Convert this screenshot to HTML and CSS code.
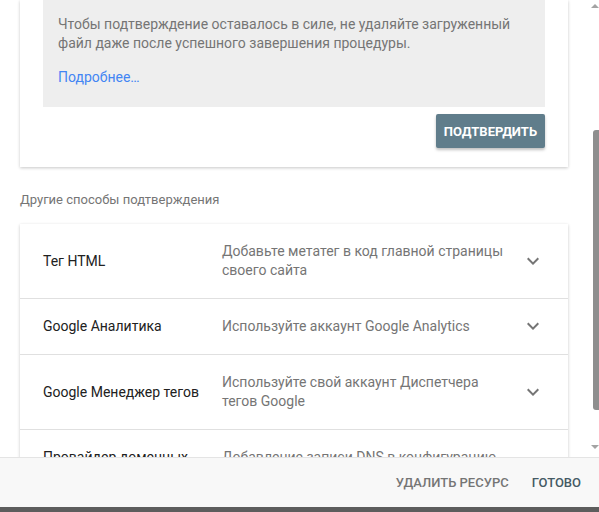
FILE: index.html
```html
<!DOCTYPE html>
<html lang="ru">
<head>
    <meta charset="UTF-8">
    <meta name="viewport" content="width=device-width, initial-scale=1.0">
    <title>Подтверждение ресурса</title>
    <link rel="stylesheet" href="styles.css">
</head>
<body>
<div class="dialog">
    <div class="dialog-body">
        <div class="content">
            <!-- HTML file method, already expanded -->
            <section class="card verify-card">
                <div class="note">
                    <p>Чтобы подтверждение оставалось в силе, не удаляйте загруженный файл даже после успешного завершения процедуры.</p>
                    <a class="more" href="#">Подробнее…</a>
                </div>
                <div class="card-actions">
                    <button class="btn-raised">Подтвердить</button>
                </div>
            </section>

            <h3 class="section-title">Другие способы подтверждения</h3>

            <div class="card methods">
                <div class="method">
                    <div class="method-name">Тег HTML</div>
                    <div class="method-desc">Добавьте метатег в код главной страницы своего сайта</div>
                    <svg class="chevron" viewBox="0 0 24 24"><path d="M7.4 8.6L12 13.2l4.6-4.6L18 10l-6 6-6-6z"/></svg>
                </div>
                <div class="method">
                    <div class="method-name">Google Аналитика</div>
                    <div class="method-desc">Используйте аккаунт Google Analytics</div>
                    <svg class="chevron" viewBox="0 0 24 24"><path d="M7.4 8.6L12 13.2l4.6-4.6L18 10l-6 6-6-6z"/></svg>
                </div>
                <div class="method">
                    <div class="method-name">Google Менеджер тегов</div>
                    <div class="method-desc">Используйте свой аккаунт Диспетчера тегов Google</div>
                    <svg class="chevron" viewBox="0 0 24 24"><path d="M7.4 8.6L12 13.2l4.6-4.6L18 10l-6 6-6-6z"/></svg>
                </div>
                <div class="method">
                    <div class="method-name">Провайдер доменных имен</div>
                    <div class="method-desc">Добавление записи DNS в конфигурацию домена</div>
                    <svg class="chevron" viewBox="0 0 24 24"><path d="M7.4 8.6L12 13.2l4.6-4.6L18 10l-6 6-6-6z"/></svg>
                </div>
            </div>
        </div>

        <div class="scrollbar">
            <span class="arrow up"></span>
            <span class="thumb"></span>
            <span class="arrow down"></span>
        </div>
    </div>

    <footer class="dialog-footer">
        <button class="btn-flat">Удалить ресурс</button>
        <button class="btn-flat primary">Готово</button>
    </footer>
</div>
<div class="page-behind"></div>
</body>
</html>
```

FILE: styles.css
```css
body {
    margin: 0;
    font-family: Roboto, "Noto Sans", sans-serif;
    background-color: #fff;
    overflow: hidden;
}
.dialog {
    height: 507px;
    display: flex;
    flex-direction: column;
}
.dialog-body {
    flex: 1;
    display: flex;
    overflow: hidden;
}
.content {
    flex: 1;
    padding: 0 17px 0 20px;
}
.card {
    background-color: #fff;
    box-shadow: 0 1px 3px rgba(0, 0, 0, 0.22);
}

/* expanded method card */
.verify-card {
    padding: 0 23px 19px;
}
.note {
    background-color: #eeeeee;
    padding: 15px 15px 20px;
    font-size: 14px;
    line-height: 19px;
    color: #757575;
}
.note p {
    margin: 0 0 15px;
}
.more {
    color: #4285f4;
    text-decoration: none;
}
.card-actions {
    display: flex;
    justify-content: flex-end;
    margin-top: 7px;
}
.btn-raised {
    height: 34px;
    padding: 0 8px;
    border: none;
    border-radius: 2px;
    background-color: #607d8b;
    color: #fff;
    font-family: inherit;
    font-size: 13px;
    font-weight: 700;
    text-transform: uppercase;
    box-shadow: 0 2px 3px rgba(0, 0, 0, 0.25);
    cursor: pointer;
}

.section-title {
    margin: 25px 0 16px;
    font-size: 13px;
    line-height: 16px;
    font-weight: 400;
    color: #757575;
}

/* list of other methods */
.method {
    display: grid;
    grid-template-columns: 179px 1fr 24px;
    align-items: center;
    padding: 18px 23px 18px 23px;
    border-bottom: 1px solid #e0e0e0;
    font-size: 14px;
    line-height: 19px;
}
.method-name {
    color: #212121;
    padding-right: 12px;
}
.method-desc {
    color: #757575;
    padding-right: 14px;
}
.chevron {
    display: block;
    width: 24px;
    height: 24px;
    margin: -3px 0 -2px;
    fill: #757575;
}

/* scrollbar of the dialog body */
.scrollbar {
    width: 14px;
    display: flex;
    flex-direction: column;
    align-items: flex-end;
}
.arrow {
    width: 0;
    height: 0;
    border-left: 4px solid transparent;
    border-right: 4px solid transparent;
}
.arrow.up {
    margin-top: 4px;
    border-bottom: 4px solid #a3a3a3;
}
.arrow.down {
    margin-top: 35px;
    border-top: 4px solid #a3a3a3;
}
.thumb {
    width: 6px;
    height: 280px;
    margin-top: 122px;
    border-radius: 3px 0 0 3px;
    background-color: #8e8e8e;
}

.dialog-footer {
    height: 49px;
    display: flex;
    align-items: center;
    justify-content: flex-end;
    gap: 7px;
    padding-right: 10px;
    background-color: #f8f8f8;
    border-top: 1px solid #e4e4e4;
    position: relative;
}
.btn-flat {
    padding: 0 8px;
    height: 36px;
    border: none;
    background: none;
    font-family: inherit;
    font-size: 13px;
    font-weight: 500;
    text-transform: uppercase;
    color: #757575;
    cursor: pointer;
}
.btn-flat.primary {
    color: #455a64;
}

.page-behind {
    height: 5px;
    background-color: #5d5d5d;
}
```
